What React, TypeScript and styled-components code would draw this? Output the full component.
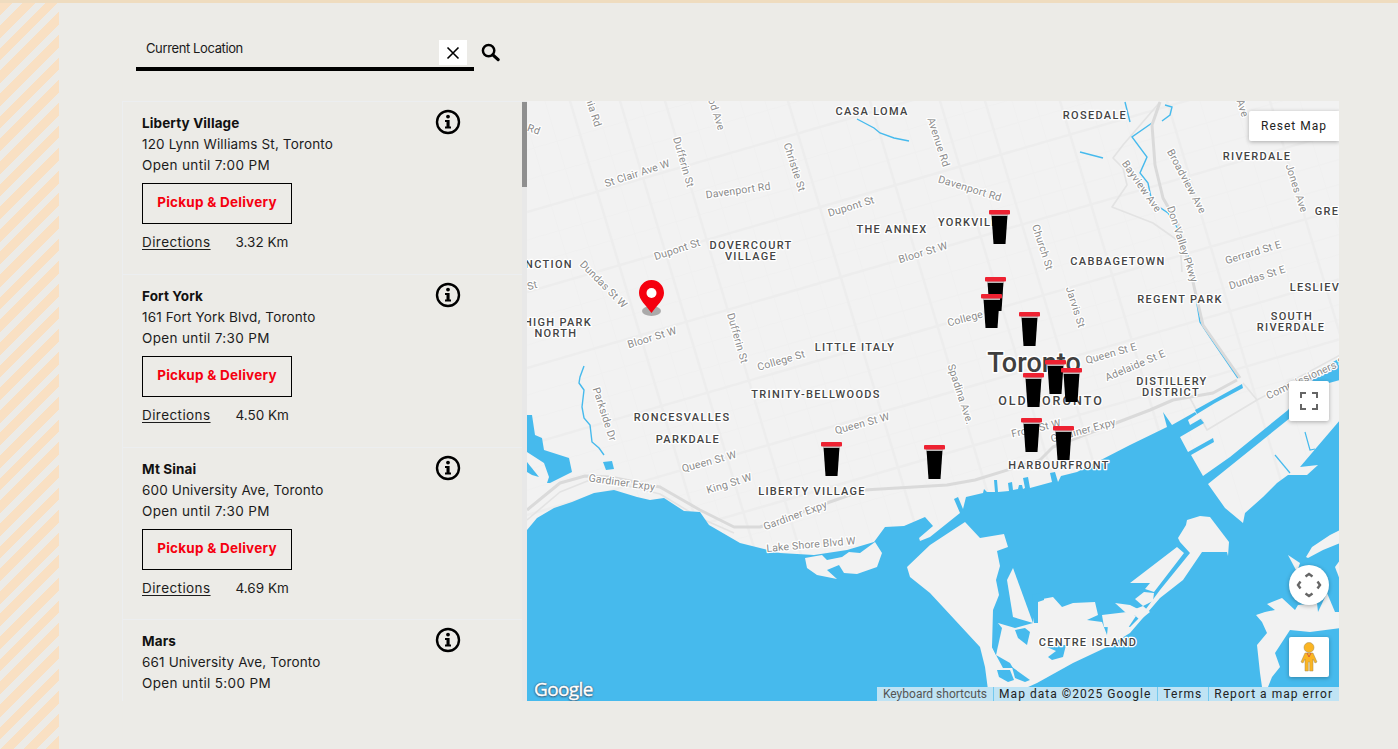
import React from "react";
import styled, { createGlobalStyle } from "styled-components";

const Global = createGlobalStyle`
  html, body { margin: 0; padding: 0; height: 100%; background: #ecebe7; overflow: hidden; }
  #root { height: 100%; }
`;

const Page = styled.div`
  width: 1398px; height: 749px; display: flex; flex-direction: column; overflow: hidden;
  background: #ecebe7; font-family: "Inter", "Liberation Sans", sans-serif; color: #111;
`;
const TopStrip = styled.div`height: 3px; flex: none; background: #efdcbf;`;
const Body = styled.div`flex: 1; display: flex; min-height: 0;`;
const Stripes = styled.div`
  width: 59px; flex: none;
  background: repeating-linear-gradient(135deg, #f9e0c3 0 9px, #ecebe7 9px 16px);
`;
const Main = styled.div`flex: 1; padding: 0 0 0 63px; display: flex; flex-direction: column; min-width: 0;`;
const SearchRow = styled.div`display: flex; align-items: flex-start; margin: 37px 0 30px 14px; height: 31px; gap: 7px;`;
const SearchBox = styled.div`
  height: 27px; border-bottom: 4px solid #000; display: flex; justify-content: space-between; align-items: flex-start;
  padding: 0 7px 0 10px; box-sizing: content-box; width: 321px;
`;
const SearchText = styled.span`font-size: 13px; line-height: 16px; letter-spacing: -0.38px; color: #1a1a1a;`;
const ClearBtn = styled.div`
  width: 28px; height: 25px; background: #fff; display: flex; align-items: center; justify-content: center; flex: none;
`;
const SearchGlyph = styled.svg`width: 19px; height: 19px; margin-top: 3px; flex: none;`;
const Content = styled.div`display: flex; height: 600px;`;
const List = styled.div`width: 405px; flex: none; height: 600px; display: flex; overflow: hidden; position: relative;`;
const Items = styled.div`width: 400px; flex: none; display: flex; flex-direction: column; overflow: hidden;`;
const Scrollbar = styled.div`width: 5px; flex: none; background: #e8e8e8;`;
const Thumb = styled.div`height: 85px; margin-top: 1px; background: #8f8f8f;`;
const Item = styled.article`
  min-height: 172.8px; flex: none; box-sizing: border-box; padding: 11px 61px 0 19px; display: flex; justify-content: space-between;
  border-top: 1px solid #eceef0; border-left: 1px solid #eceef0;
`;
const Info = styled.div`display: flex; flex-direction: column; align-items: flex-start;`;
const Title = styled.div`font-size: 13.5px; line-height: 21px; font-weight: 700; letter-spacing: 0.12px; color: #111;`;
const Address = styled.div`font-size: 13.5px; line-height: 21px; letter-spacing: 0.15px; color: #1c1c1c; white-space: nowrap;`;
const Hours = styled(Address)`letter-spacing: 0.35px;`;
const Pickup = styled.div`
  width: 150px; height: 41px; margin-top: 7px; box-sizing: border-box; border: 1px solid #000; display: flex; align-items: center; justify-content: center;
  color: #f5000f; font-size: 13.5px; font-weight: 700; letter-spacing: 0.25px; padding-bottom: 3px;
`;
const Meta = styled.div`display: flex; gap: 25px; margin-top: 8px; font-size: 13.5px; line-height: 21px; color: #1c1c1c;`;
const DirLink = styled.span`text-decoration: underline; text-underline-offset: 2px; letter-spacing: 0.42px;`;
const InfoGlyph = styled.svg`width: 26px; height: 26px; flex: none; margin-top: -4px;`;

const MapPanel = styled.div`width: 812px; height: 600px; flex: none; position: relative; overflow: hidden; background: #f2f2f2;`;
const MapSvg = styled.svg`display: block; width: 812px; height: 600px;`;
const Place = styled.text`
  font-family: Roboto, sans-serif; font-size: 11px; font-weight: 500; letter-spacing: 1.3px; fill: #444;
  stroke: #fff; stroke-width: 2.5px; paint-order: stroke; text-anchor: middle; stroke-linejoin: round;
`;
const District = styled(Place)`font-size: 12.5px; letter-spacing: 2px;`;
const City = styled(Place)`font-size: 27px; letter-spacing: 0; fill: #3f3f3f; stroke-width: 3px;`;
const Street = styled.text`
  font-family: Roboto, sans-serif; font-size: 10.5px; letter-spacing: 0.2px; fill: #8b8b8b;
  stroke: #fff; stroke-width: 2.5px; paint-order: stroke; text-anchor: middle; stroke-linejoin: round;
`;
const ResetBtn = styled.div`
  position: absolute; top: 10px; right: 0; width: 90px; height: 30px; background: #fff; border-radius: 2px 0 0 2px;
  box-shadow: 0 1px 4px rgba(0,0,0,.3); display: flex; align-items: center; justify-content: center;
  font: 400 12px Roboto, sans-serif; letter-spacing: 1px; color: #222;
`;
const MapBtn = styled.div<{ $top: number; $round?: boolean }>`
  position: absolute; top: ${p => p.$top}px; right: 10px; width: 40px; height: 40px; background: #fff;
  border-radius: ${p => (p.$round ? "50%" : "2px")}; box-shadow: 0 1px 4px rgba(0,0,0,.3);
  display: flex; align-items: center; justify-content: center;
`;
const Logo = styled.span`
  position: absolute; left: 7px; bottom: 0px; font: 500 19px/24px "Open Sans", sans-serif; letter-spacing: -0.6px; color: #fff;
  -webkit-text-stroke: 0.4px #fff; text-shadow: 0 0 2px #39536b, 0 1px 2px #39536b, 0 0 1px #39536b;
`;
const Attribution = styled.div`
  position: absolute; right: 0; bottom: 0; height: 14px; display: flex; background: #bfe3f4;
  font: 400 12px/15px Roboto, sans-serif; color: #222;
`;
const AttrItem = styled.span<{ $muted?: boolean; $wide?: boolean }>`
  padding: 0 6px 0 5px; letter-spacing: ${p => (p.$wide ? "1.03px" : "0")}; color: ${p => (p.$muted ? "#555" : "#222")};
  border-left: 1px solid ${p => (p.$muted ? "transparent" : "#74c9ee")}; white-space: nowrap;
`;

const stores = [
  { name: "Liberty Village", addr: "120 Lynn Williams St, Toronto", hours: "Open until 7:00 PM", dist: "3.32 Km" },
  { name: "Fort York", addr: "161 Fort York Blvd, Toronto", hours: "Open until 7:30 PM", dist: "4.50 Km" },
  { name: "Mt Sinai", addr: "600 University Ave, Toronto", hours: "Open until 7:30 PM", dist: "4.69 Km" },
  { name: "Mars", addr: "661 University Ave, Toronto", hours: "Open until 5:00 PM", dist: "" },
];

const WATER = "#46baed";
const LAND = "#f2f2f2";

const mainWater = "527,530 537,518 554,508 572,502 594,493 614,490 637,497 650,500 664,498 684,511 700,512 709,525 740,543 780,553 814,555 847,550 874,542 885,527 904,526 925,517 933,526 919,538 920,541 930,537 960,513 954,499 958,497 963,509 966,497 983,493 984,489 987,492 995,492 994,480 997,480 998,492 1009,491 1008,483 1012,482 1013,490 1018,489 1019,485 1022,485 1023,489 1025,488 1023,478 1028,477 1030,488 1052,482 1050,473 1055,472 1058,482 1061,476 1077,472 1095,463 1130,445 1167,427 1163,412 1172,425 1195,412 1204,423 1180,437 1188,452 1213,438 1214,442 1191,455 1203,476 1230,457 1288,410 1315,372 1333,362 1340,358 1340,380 1329,383 1290,418 1208,484 1225,508 1243,523 1245,513 1263,497 1277,483 1288,475 1307,475 1318,465 1300,467 1317,447 1340,420 1340,702 527,702";
const lands = [
  "907,567 930,545 965,522 980,538 1004,534 1008,547 997,551 1000,566 996,580 999,595 993,610 992,647 996,655 998,623 1015,628 1033,623 1037,600 1053,597 1062,607 1073,603 1095,602 1098,615 1087,620 1102,622 1107,635 1108,625 1115,623 1130,627 1140,617 1160,590 1190,553 1180,542 1178,538 1186,525 1187,520 1200,516 1210,517 1229,542 1228,556 1227,552 1202,552 1183,580 1160,598 1130,633 1107,647 1073,663 1037,683 995,702 988,690 985,667 980,647 930,593 910,577",
  "1007,580 1013,568 1033,623 1013,617",
  "1130,583 1177,547 1184,553 1154,592 1145,589 1150,583",
  "1144,592 1154,593 1153,601 1143,606 1135,599",
  "1115,603 1130,605 1140,610 1133,617 1125,612",
  "1102,615 1127,612 1136,616 1128,628 1104,627",
  "1130,611 1143,606 1150,612 1140,620",
  "805,558 822,555 827,560 842,557 849,552 860,553 875,542 882,553 877,567 857,574 844,573 839,565 827,570 837,579 817,575 807,568",
  "1267,604 1282,598 1295,610 1298,605 1317,603 1318,612 1340,612 1340,628 1310,632 1290,630 1275,653 1280,667 1272,677 1268,687 1262,687 1260,673 1257,645 1267,633 1262,622 1256,615 1265,612 1275,610",
  "1306,557 1312,547 1330,535 1340,530 1340,543 1323,550 1308,558",
  "1288,555 1300,563 1297,572",
  "1318,612 1327,593 1335,612",
  "1335,567 1340,560 1340,580",
  "1188,420 1200,412 1202,418 1190,425",
];
const smallWater = [
  "527,415 532,415 535,435 542,438 544,450 569,458 572,472 550,483 547,483 549,477 544,463 527,452",
  "527,462 539,477 532,475 527,472",
  "603,462 612,461 614,469 606,470",
  "1195,410 1242,384 1243,388 1215,403 1197,414",
  "992,647 998,623 1002,628 996,655",
  "1015,630 1025,628 1030,632 1027,645 1018,638",
  "1047,647 1058,645 1066,645 1063,657 1052,660 1048,657 1056,651",
  "996,655 1010,663 1013,668 1003,668",
  "997,670 1010,670 1014,680 1008,682 999,677",
  "1012,667 1030,680 1025,682 1015,678",
  "1032,595 1044,592 1044,600 1038,602 1038,623 1034,623",
];
const rivers = [
  "584,366 580,377 579,383 584,390 582,407 584,418 590,425 592,442 599,448 604,455",
  "857,119 874,128 880,133 894,138 909,141",
  "1152,123 1132,137 1147,157 1140,173 1148,183 1152,202 1168,213 1180,232 1190,262 1195,292 1200,322 1210,337 1238,378",
  "1125,102 1130,122",
  "1080,152 1103,158",
  "1165,105 1172,107 1170,115 1162,121",
];
const highways = [
  "527,510 560,483 585,476 610,477 660,487 700,510 734,527 760,527 827,503 864,490 947,485 975,480 1040,460 1053,447 1150,410 1173,400 1213,393 1237,380",
  "1160,102 1152,125 1155,165 1163,198 1180,228 1193,282 1203,325 1240,378",
];
const ramps = [
  "1160,102 1123,145 1113,158 1123,168 1127,185 1112,207 1153,223 1180,242 1182,272",
  "1190,398 1207,430 1257,400 1243,383",
  "1257,400 1340,355",
  "527,520 560,492 590,480 612,482 660,494 700,518 734,533",
];
const ew = [212, 292, 368, 445, 515, 575];
const ewMinor = [150, 180, 240, 265, 320, 345, 395, 420, 470, 490, 540, 555, 600];
const ns = [570, 620, 665, 788, 870, 940, 985, 1060, 1167, 1270];
const nsMinor = [520, 545, 595, 640, 690, 715, 740, 765, 812, 840, 900, 960, 1012, 1035, 1090, 1120, 1200, 1235, 1300];

const places: [string, number, number][] = [
  ["CASA LOMA", 872, 115], ["ROSEDALE", 1095, 119], ["RIVERDALE", 1257, 160], ["GRE", 1327, 215], ["YORKVILLE", 972, 226],
  ["THE ANNEX", 892, 233], ["DOVERCOURT", 751, 249], ["VILLAGE", 751, 260], ["CABBAGETOWN", 1118, 265], ["NCTION", 549, 268],
  ["REGENT PARK", 1180, 303], ["LESLIEV", 1315, 291], ["SOUTH", 1292, 320], ["RIVERDALE", 1291, 331], ["HIGH PARK", 558, 326],
  ["NORTH", 556, 337], ["LITTLE ITALY", 855, 351], ["TRINITY-BELLWOODS", 816, 398], ["DISTILLERY", 1172, 385], ["DISTRICT", 1171, 396],
  ["RONCESVALLES", 682, 421], ["PARKDALE", 688, 443], ["HARBOURFRONT", 1059, 469], ["LIBERTY VILLAGE", 812, 495],
  ["CENTRE ISLAND", 1088, 646],
];
const streets: [string, number, number, number][] = [
  ["Rd", 534, 133, 20], ["nia Rd", 594, 116, 72], ["od Ave", 717, 118, 72], ["Avenue Rd", 939, 146, 72], ["St Clair Ave W", 637, 177, -18],
  ["Dufferin St", 684, 166, 74], ["Christie St", 795, 171, 72], ["Davenport Rd", 738, 194, -8], ["Dupont St", 851, 210, -17], ["Davenport Rd", 970, 192, 17],
  ["Church St", 1043, 251, 72], ["Jarvis St", 1076, 311, 72], ["Bloor St W", 923, 256, -17], ["Dupont St", 677, 253, -18], ["Dundas St W", 604, 288, 45],
  ["St", 532, 289, -15], ["Bloor St W", 652, 341, -17], ["Dufferin St", 738, 342, 74], ["College St", 781, 364, -16], ["College", 965, 322, -15],
  ["Spadina Ave.", 961, 398, 72], ["Parkside Dr", 605, 418, 72], ["Queen St W", 862, 427, -15], ["Queen St W", 709, 465, -15], ["King St W", 729, 487, -17],
  ["Gardiner Expy", 622, 486, 8], ["Gardiner Expy", 795, 519, -20], ["Lake Shore Blvd W", 811, 548, -5], ["Front St W", 1036, 432, -13], ["Gardiner Expy", 1083, 434, -15],
  ["Queen St E", 1111, 357, -16], ["Adelaide St E", 1135, 369, -23], ["Gerrard St E", 1253, 256, -17], ["Dundas St E", 1257, 281, -17], ["Bayview Ave", 1142, 190, 55],
  ["Broadview Ave", 1187, 185, 62], ["Don Valley Pkwy", 1183, 248, 72], ["Jones Ave", 1297, 192, 72], ["Commissioners St", 1307, 381, -25], ["Ave", 1243, 112, 72],
];
const cups: [number, number][] = [
  [989, 210], [985, 277], [981, 294], [1019, 312], [1045, 360], [1061, 368], [1023, 373], [1021, 418], [1053, 426], [821, 442], [924, 445],
];

const Cup = ({ x, y }: { x: number; y: number }) => (
  <g transform={`translate(${x} ${y})`}>
    <path d="M2.5 5 H18.5 L16.5 34 H4.5 Z" fill="#000" />
    <rect x="2" y="4" width="17" height="2" fill="#b9b9b9" />
    <rect x="0" y="0" width="21" height="4.5" rx="1" fill="#ee2232" />
  </g>
);

const InfoIcon = () => (
  <InfoGlyph viewBox="0 0 26 26">
    <circle cx="13" cy="13" r="11" fill="none" stroke="#000" strokeWidth="2.4" />
    <circle cx="13" cy="7.6" r="1.9" fill="#000" />
    <path d="M10 11 H14.6 V17.4 H16 V19.4 H10 V17.4 H11.5 V13 H10 Z" fill="#000" />
  </InfoGlyph>
);

export default function App() {
  return (
    <Page>
      <Global />
      <TopStrip />
      <Body>
        <Stripes />
        <Main>
          <SearchRow>
            <SearchBox>
              <SearchText>Current Location</SearchText>
              <ClearBtn>
                <svg width="14" height="14" viewBox="0 0 14 14"><path d="M1.5 1.5 L12.5 12.5 M12.5 1.5 L1.5 12.5" stroke="#000" strokeWidth="1.6" /></svg>
              </ClearBtn>
            </SearchBox>
            <SearchGlyph viewBox="0 0 20 20">
              <circle cx="8" cy="8" r="6" fill="none" stroke="#000" strokeWidth="2.6" />
              <path d="M12.5 12.5 L18 17.5" stroke="#000" strokeWidth="3.4" strokeLinecap="round" />
            </SearchGlyph>
          </SearchRow>
          <Content>
            <List>
              <Items>
                {stores.map(s => (
                  <Item key={s.name}>
                    <Info>
                      <Title>{s.name}</Title>
                      <Address>{s.addr}</Address>
                      <Hours>{s.hours}</Hours>
                      {s.dist && (
                        <>
                          <Pickup>Pickup &amp; Delivery</Pickup>
                          <Meta>
                            <DirLink>Directions</DirLink>
                            <span>{s.dist}</span>
                          </Meta>
                        </>
                      )}
                    </Info>
                    <InfoIcon />
                  </Item>
                ))}
              </Items>
              <Scrollbar><Thumb /></Scrollbar>
            </List>
            <MapPanel>
              <MapSvg viewBox="527 101 812 600">
                <rect x="527" y="101" width="812" height="600" fill={LAND} />
                {ewMinor.map(b => <line key={"em" + b} x1="527" y1={b} x2="1339" y2={b - 0.29 * 812} stroke="#f0f0f0" strokeWidth="1" />)}
                {nsMinor.map(b => <line key={"nm" + b} x1={b} y1="101" x2={b + 180} y2="701" stroke="#f0f0f0" strokeWidth="1" />)}
                {ew.map(b => <line key={"e" + b} x1="527" y1={b} x2="1339" y2={b - 0.29 * 812} stroke="#ededed" strokeWidth="2.5" />)}
                {ns.map(b => <line key={"n" + b} x1={b} y1="101" x2={b + 180} y2="701" stroke="#ededed" strokeWidth="2.5" />)}
                {ramps.map(h => <polyline key={h} points={h} fill="none" stroke="#e3e3e3" strokeWidth="1.6" strokeLinejoin="round" />)}
                <polygon points={mainWater} fill={WATER} />
                {lands.map(p => <polygon key={p} points={p} fill={LAND} />)}
                {smallWater.map(p => <polygon key={p} points={p} fill={WATER} />)}
                {rivers.map(r => <polyline key={r} points={r} fill="none" stroke={WATER} strokeWidth="1.4" />)}
                {highways.map(h => <polyline key={h} points={h} fill="none" stroke="#dadada" strokeWidth="3" strokeLinejoin="round" />)}
                <polyline points="1275,455 1290,473" fill="none" stroke={WATER} strokeWidth="1.2" />
                <polyline points="1305,432 1310,450 1315,449" fill="none" stroke={WATER} strokeWidth="1.2" />
                {streets.map(([t, x, y, r]) => (
                  <Street key={t + x} x={x} y={y} transform={`rotate(${r} ${x} ${y - 4})`}>{t}</Street>
                ))}
                {places.map(([t, x, y]) => <Place key={t + x} x={x} y={y}>{t}</Place>)}
                <District x="1051" y="405">OLD TORONTO</District>
                <City x="1034" y="372">Toronto</City>
                <ellipse cx="651.5" cy="311" rx="9.5" ry="5" fill="#9d9d9d" opacity="0.85" />
                <path d="M651.5 280 C644 280 639 286 639 293 C639 300 646 305 651.5 313 C657 305 664 300 664 293 C664 286 659 280 651.5 280 Z" fill="#f5000f" />
                <circle cx="651.5" cy="293" r="5" fill="#fff" />
                {cups.map(([x, y]) => <Cup key={x + "-" + y} x={x} y={y} />)}
              </MapSvg>
              <ResetBtn>Reset Map</ResetBtn>
              <MapBtn $top={280}>
                <svg width="18" height="18" viewBox="0 0 18 18" fill="none" stroke="#666" strokeWidth="2">
                  <path d="M1 6 V1 H6 M12 1 H17 V6 M17 12 V17 H12 M6 17 H1 V12" />
                </svg>
              </MapBtn>
              <MapBtn $top={464} $round>
                <svg width="26" height="26" viewBox="-1 -1 26 26" fill="none" stroke="#666" strokeWidth="2.4">
                  <path d="M8.5 3.5 L12 1 L15.5 3.5 M8.5 20.5 L12 23 L15.5 20.5 M3.5 8.5 L1 12 L3.5 15.5 M20.5 8.5 L23 12 L20.5 15.5" />
                </svg>
              </MapBtn>
              <MapBtn $top={536}>
                <svg width="18" height="30" viewBox="0 0 18 30">
                  <circle cx="9" cy="5.5" r="5" fill="#fbb523" stroke="#a08a55" strokeWidth="0.5" />
                  <path d="M5 11 H13 L17 20 L15 21 L13 17 V29 H9.7 V20 H8.3 V29 H5 V17 L3 21 L1 20 Z" fill="#fbb523" stroke="#a08a55" strokeWidth="0.5" />
                  <path d="M7 11 L9 15 L11 11" fill="none" stroke="#d8603a" strokeWidth="1" />
                </svg>
              </MapBtn>
              <Logo>Google</Logo>
              <Attribution>
                <AttrItem $muted>Keyboard shortcuts</AttrItem>
                <AttrItem $wide>Map data ©2025 Google</AttrItem>
                <AttrItem $wide>Terms</AttrItem>
                <AttrItem $wide>Report a map error</AttrItem>
              </Attribution>
            </MapPanel>
          </Content>
        </Main>
      </Body>
    </Page>
  );
}
